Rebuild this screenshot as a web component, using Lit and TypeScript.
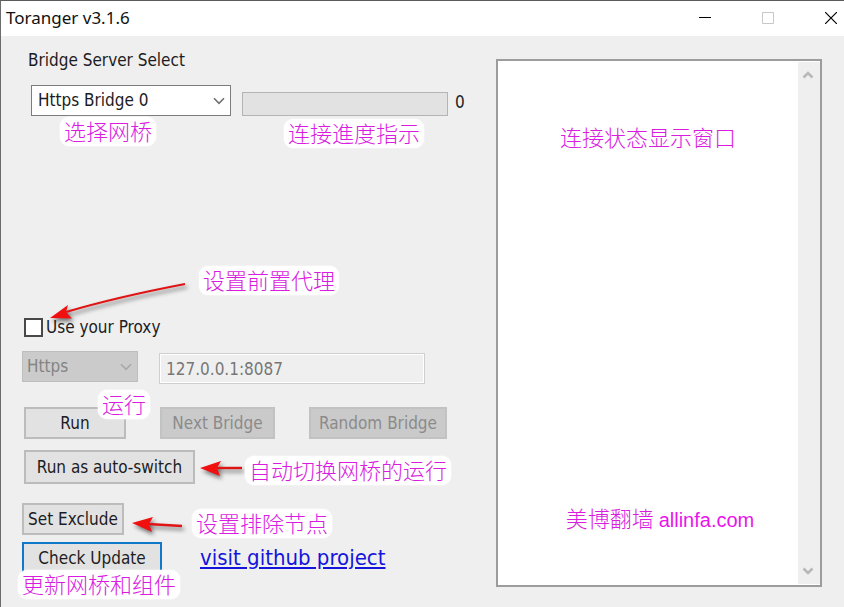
import { LitElement, html, css, svg } from "lit";
import { customElement, state } from "lit/decorators.js";

const chevron = svg`<svg class="chevron" viewBox="0 0 12 8" width="12" height="8" aria-hidden="true">
  <path d="M1 1.2 L6 6.4 L11 1.2" fill="none" stroke="currentColor" stroke-width="1.6"/></svg>`;

@customElement("status-log")
class StatusLog extends LitElement {
  static styles = css`
    :host {
      display: flex;
      box-sizing: border-box;
      border: 2px solid #9c9c9c;
      background: #fff;
    }
    .messages {
      flex: 1;
      display: flex;
      flex-direction: column;
      justify-content: space-between;
      align-items: center;
      padding: 60px 0 50px;
      color: #d91ce0;
      font: 300 22px/30px "Noto Sans CJK SC", sans-serif;
      white-space: nowrap;
    }
    p {
      margin: 0;
    }
    .site {
      padding-left: 24px;
    }
    .latin {
      font: 400 20px/30px "Liberation Sans", sans-serif;
      color: #ea14ea;
    }
    .scrollbar {
      display: flex;
      flex-direction: column;
      justify-content: space-between;
      width: 22px;
      background: #efefef;
      margin: 1px 0;
    }
    button {
      height: 26px;
      padding: 0;
      border: 0;
      background: none;
      color: #b8b8b8;
    }
    svg {
      display: block;
      margin: 0 4px;
    }
  `;

  render() {
    return html`
      <div class="messages" role="log">
        <p>连接状态显示窗口</p>
        <p class="site">美博翻墙 <span class="latin">allinfa.com</span></p>
      </div>
      <div class="scrollbar">
        <button aria-label="Scroll up">
          <svg viewBox="0 0 12 8" width="12" height="8"><path d="M1.5 6.5 L6 2 L10.5 6.5" fill="none" stroke="currentColor" stroke-width="2.6"/></svg>
        </button>
        <button aria-label="Scroll down">
          <svg viewBox="0 0 12 8" width="12" height="8"><path d="M1.5 1.5 L6 6 L10.5 1.5" fill="none" stroke="currentColor" stroke-width="2.6"/></svg>
        </button>
      </div>
    `;
  }
}

@customElement("app-root")
class AppRoot extends LitElement {
  @state() private progress = 0;

  static styles = css`
    :host {
      display: flex;
      flex-direction: column;
      box-sizing: border-box;
      min-height: 100vh;
      border-top: 1px solid #5c5a5c;
      border-left: 1px solid #6c6c6c;
      background: #efefef;
      color: #1c1c24;
      font: 17px/20px "DejaVu Sans Condensed", "DejaVu Sans", sans-serif;
      font-stretch: condensed;
    }
    * {
      box-sizing: border-box;
    }
    .titlebar {
      display: flex;
      justify-content: space-between;
      align-items: center;
      height: 35px;
      padding: 0 1px 2px 5px;
      background: #fff;
    }
    h1 {
      margin: 0;
      font: 400 17px/24px "Noto Sans", sans-serif;
      color: #111;
    }
    .window-buttons {
      display: flex;
      gap: 39px;
    }
    .window-buttons button {
      display: flex;
      justify-content: center;
      width: 24px;
      padding: 0;
      border: 0;
      background: none;
    }
    .body {
      flex: 1;
      display: flex;
    }
    status-log {
      flex: 1;
      margin: 23px 22px 20px 0;
    }
    form {
      display: flex;
      flex-direction: column;
      justify-content: space-between;
      width: 474px;
      margin: 14px 0 33px 21px;
    }
    .group {
      position: relative;
    }
    .row {
      display: flex;
      align-items: flex-start;
    }
    .inset {
      padding-left: 2px;
    }
    .heading {
      display: block;
      padding-left: 6px;
    }
    .server {
      align-items: flex-end;
      margin-top: 15px;
      padding-left: 9px;
    }
    .combo {
      position: relative;
      display: block;
    }
    .combo .chevron {
      position: absolute;
      right: 6px;
      top: 12px;
      color: #707070;
      pointer-events: none;
    }
    select,
    input,
    button {
      font: inherit;
      color: inherit;
      margin: 0;
      border-radius: 0;
    }
    select {
      appearance: none;
      display: block;
      width: 100%;
      height: 31px;
      padding: 0 24px 1px 6px;
      border: 1px solid #7c7c7c;
      background: #fff;
      opacity: 1;
    }
    .bridge {
      width: 200px;
    }
    .scheme {
      width: 116px;
    }
    .scheme select {
      padding-left: 4px;
      border: 1px solid #bebebe;
      background: #cbcbcb;
      color: #838383;
    }
    .scheme .chevron {
      color: #a8a8a8;
    }
    progress {
      appearance: none;
      display: block;
      width: 206px;
      height: 24px;
      margin: 0 7px 0 11px;
      border: 1px solid #b4b4b4;
      background: #e2e2e2;
    }
    progress::-webkit-progress-bar {
      background: #e2e2e2;
    }
    progress::-webkit-progress-value {
      background: #06b025;
    }
    output {
      padding-bottom: 4px;
    }
    .check {
      gap: 3px;
      align-items: center;
    }
    .check input {
      appearance: none;
      width: 19px;
      height: 19px;
      border: 2px solid #484848;
      background: #fff;
    }
    .check input:checked {
      background: #3c3c3c;
    }
    .proxy {
      align-items: flex-end;
      gap: 21px;
      height: 33px;
      margin-top: 14px;
    }
    .proxy .combo {
      align-self: flex-start;
    }
    .address {
      width: 266px;
      height: 31px;
      padding: 0 6px;
      border: 1px solid #cfcfcf;
      outline: 1px solid #fff;
      outline-offset: -2px;
      background: #efefef;
      color: #777;
    }
    .run {
      margin-top: 23px;
    }
    .run :nth-child(2) {
      margin: 0 34px;
    }
    .action {
      height: 32px;
      padding: 0;
      border: 2px solid #bcbcbc;
      background: #e2e2e2;
      text-align: center;
      white-space: nowrap;
    }
    .action:disabled {
      border-color: #c2c2c2;
      background: #cacaca;
      color: #8b8b8b;
    }
    .small {
      width: 102px;
    }
    .medium {
      width: 115px;
    }
    .large {
      width: 138px;
    }
    .wide {
      width: 171px;
      height: 34px;
    }
    .auto {
      margin-top: 11px;
    }
    .exclude {
      margin-top: 19px;
    }
    .update {
      align-items: center;
      gap: 38px;
      margin-top: 7px;
    }
    .update .action {
      width: 140px;
      border: 2px solid #0f78c8;
    }
    a {
      font-size: 22px;
      color: #1414dc;
    }
    .note {
      position: absolute;
      padding: 0 4px 2px;
      border-radius: 9px;
      background: #fff;
      box-shadow: 0 0 2px #fff;
      color: #d91ce0;
      font: 300 22px/27px "Noto Sans CJK SC", sans-serif;
      white-space: nowrap;
      pointer-events: none;
    }
    .note-bridge { left: 38px; top: 67px; }
    .note-progress { left: 262px; top: 69px; }
    .note-proxy { left: 177px; top: -51px; }
    .note-run { left: 76px; top: 73px; }
    .note-auto { left: 223px; top: 139px; }
    .note-exclude { left: 170px; top: 192px; }
    .note-update { left: -4px; top: 253px; }
    .arrows {
      position: absolute;
      left: 0;
      top: -39px;
      filter: drop-shadow(2px 3px 2px #0008);
      pointer-events: none;
    }
  `;

  render() {
    return html`
      <header class="titlebar">
        <h1>Toranger v3.1.6</h1>
        <div class="window-buttons">
          <button aria-label="Minimize">
            <svg width="12" height="12"><path d="M0 5.5H12" stroke="#000"/></svg>
          </button>
          <button aria-label="Maximize" disabled>
            <svg width="12" height="12"><path d="M.5 .5H11.5V11.5H.5Z" fill="none" stroke="#c8c8c8"/></svg>
          </button>
          <button aria-label="Close">
            <svg width="12" height="12"><path d="M0 0L12 12M12 0L0 12" stroke="#000" stroke-width="1.2"/></svg>
          </button>
        </div>
      </header>
      <main class="body">
        <form @submit=${(e: Event) => e.preventDefault()}>
          <div class="group">
            <label class="heading" for="bridge">Bridge Server Select</label>
            <div class="row server">
              <div class="combo bridge">
                <select id="bridge"><option>Https Bridge 0</option></select>
                ${chevron}
              </div>
              <progress max="100" .value=${this.progress} aria-label="Connection progress"></progress>
              <output>${this.progress}</output>
            </div>
            <span class="note note-bridge">选择网桥</span>
            <span class="note note-progress">连接進度指示</span>
          </div>

          <div class="group">
            <div class="row check inset">
              <input type="checkbox" id="use-proxy" />
              <label for="use-proxy">Use your Proxy</label>
            </div>
            <div class="row proxy">
              <div class="combo scheme">
                <select aria-label="Proxy type" disabled><option>Https</option></select>
                ${chevron}
              </div>
              <input class="address" aria-label="Proxy address" value="127.0.0.1:8087" disabled />
            </div>
            <div class="row run inset">
              <button class="action small">Run</button>
              <button class="action medium" disabled>Next Bridge</button>
              <button class="action large" disabled>Random Bridge</button>
            </div>
            <div class="row auto inset">
              <button class="action wide">Run as auto-switch</button>
            </div>
            <div class="row exclude">
              <button class="action small">Set Exclude</button>
            </div>
            <div class="row update">
              <button class="action large">Check Update</button>
              <a href="#">visit github project</a>
            </div>

            <svg class="arrows" width="240" height="260" fill="#f01010" aria-hidden="true">
              <path d="M163 6Q95 19 44 34" fill="none" stroke="#e01414" stroke-width="2"/>
              <path d="M28 40L46 27L44 34L50 40.5Z"/>
              <path d="M220 190H192" stroke="#e01414" stroke-width="2.4"/>
              <path d="M178 190L199 183L195 190L198 198Z"/>
              <path d="M160 248L126 246" stroke="#e01414" stroke-width="2.4"/>
              <path d="M110 245L131 239L127 246L130 254Z"/>
            </svg>
            <span class="note note-proxy">设置前置代理</span>
            <span class="note note-run">运行</span>
            <span class="note note-auto">自动切换网桥的运行</span>
            <span class="note note-exclude">设置排除节点</span>
            <span class="note note-update">更新网桥和组件</span>
          </div>
        </form>
        <status-log></status-log>
      </main>
    `;
  }
}
